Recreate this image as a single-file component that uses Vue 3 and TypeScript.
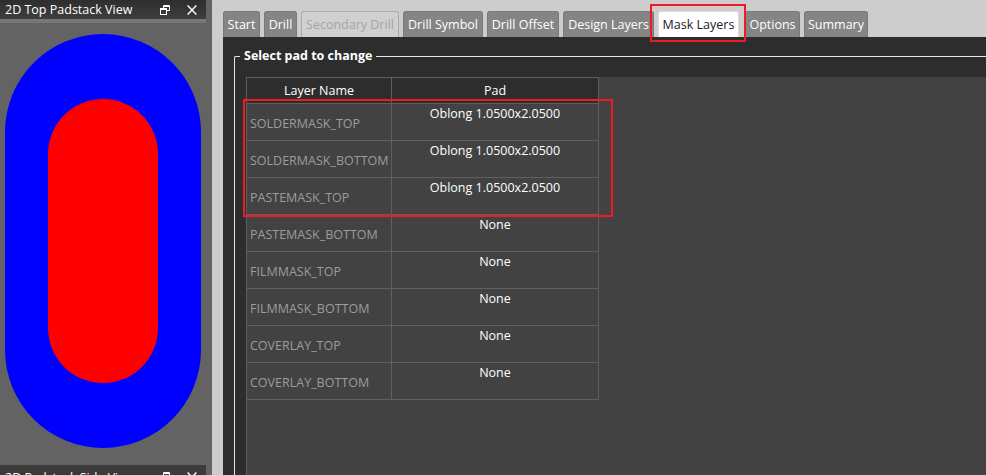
<script setup lang="ts">
interface Tab { label: string; width: number; state?: 'disabled' | 'active' }
const tabs: Tab[] = [
  { label: 'Start', width: 37 },
  { label: 'Drill', width: 33 },
  { label: 'Secondary Drill', width: 98, state: 'disabled' },
  { label: 'Drill Symbol', width: 80 },
  { label: 'Drill Offset', width: 72 },
  { label: 'Design Layers', width: 91 },
  { label: 'Mask Layers', width: 81, state: 'active' },
  { label: 'Options', width: 55 },
  { label: 'Summary', width: 64 },
]
const oblong = 'Oblong 1.0500x2.0500'
const rows = [
  { layer: 'SOLDERMASK_TOP', pad: oblong },
  { layer: 'SOLDERMASK_BOTTOM', pad: oblong },
  { layer: 'PASTEMASK_TOP', pad: oblong },
  { layer: 'PASTEMASK_BOTTOM', pad: 'None' },
  { layer: 'FILMMASK_TOP', pad: 'None' },
  { layer: 'FILMMASK_BOTTOM', pad: 'None' },
  { layer: 'COVERLAY_TOP', pad: 'None' },
  { layer: 'COVERLAY_BOTTOM', pad: 'None' },
]
</script>

<template>
  <div class="app">
    <aside class="dock">
      <div class="title">
        <span class="title-text">2D Top Padstack View</span>
        <svg class="ico restore" width="10" height="10" viewBox="0 0 10 10" fill="none" stroke="#fff">
          <path d="M3.5 3V.5h6v5H7" />
          <path d="M3.5 1.5h6" />
          <rect x=".5" y="3.5" width="6" height="6" />
          <path d="M.5 4.5h6" />
        </svg>
        <svg class="ico close" width="10" height="10" viewBox="0 0 10 10" fill="none" stroke="#fff" stroke-width="1.4">
          <path d="M.6.6l8.8 8.8M9.4.6L.6 9.4" />
        </svg>
      </div>
      <div class="title-strip"></div>
      <div class="canvas">
        <div class="pad-outer">
          <div class="pad-inner"></div>
        </div>
      </div>
      <div class="title second">
        <span class="title-text">2D Padstack Side View</span>
        <svg class="ico restore" width="10" height="10" viewBox="0 0 10 10" fill="none" stroke="#fff">
          <path d="M3.5 3V.5h6v5H7" />
          <path d="M3.5 1.5h6" />
          <rect x=".5" y="3.5" width="6" height="6" />
          <path d="M.5 4.5h6" />
        </svg>
        <svg class="ico close" width="10" height="10" viewBox="0 0 10 10" fill="none" stroke="#fff" stroke-width="1.4">
          <path d="M.6.6l8.8 8.8M9.4.6L.6 9.4" />
        </svg>
      </div>
    </aside>

    <main class="main">
      <nav class="tabs">
        <div
          v-for="t in tabs"
          :key="t.label"
          class="tab"
          :class="t.state"
          :style="{ width: t.width + 'px' }"
        >{{ t.label }}</div>
      </nav>
      <section class="body">
        <fieldset class="group">
          <legend>Select pad to change</legend>
          <div class="sheet">
            <div class="table">
              <div class="head cell">Layer Name</div>
              <div class="head cell">Pad</div>
              <template v-for="r in rows" :key="r.layer">
                <div class="cell layer">{{ r.layer }}</div>
                <div class="cell value">{{ r.pad }}</div>
              </template>
            </div>
          </div>
        </fieldset>
      </section>
    </main>

    <div class="mark mark-tab"></div>
    <div class="mark mark-rows"></div>
  </div>
</template>

<style>
html, body { margin: 0; padding: 0; overflow: hidden; }
</style>

<style scoped>
.app {
  position: relative;
  display: flex;
  width: 986px;
  height: 475px;
  overflow: hidden;
  background: #cdcdcd;
  font-family: "Open Sans", "Noto Sans", sans-serif;
  font-size: 12.5px;
}
.dock {
  display: flex;
  flex-direction: column;
  flex: none;
  width: 212px;
  height: 475px;
  background: #636363;
}
.title {
  display: flex;
  flex: none;
  align-items: center;
  width: 206px;
  height: 19px;
  padding-left: 5px;
  box-sizing: border-box;
  background: linear-gradient(#2e2e2e, #3e3e3e);
  color: #fff;
}
.title.second {
  height: 21px;
  align-items: flex-start;
  padding-top: 4px;
  background: linear-gradient(#3e3e3e, #333);
}
.second .ico { margin-top: 3px; }
.title-text { flex: 1; white-space: nowrap; line-height: 18px; }
.ico { flex: none; }
.restore { margin-right: 17px; }
.close { margin-right: 9px; }
.title-strip { flex: none; width: 206px; height: 4px; background: #777; }
.canvas { flex: none; height: 442px; padding: 11px 0 0 5px; box-sizing: border-box; }
.pad-outer {
  display: flex;
  align-items: center;
  justify-content: center;
  width: 196px;
  height: 414px;
  border-radius: 98px;
  background: #0000ff;
}
.pad-inner { width: 110px; height: 284px; border-radius: 55px; background: #ff0000; }
.main { display: flex; flex: 1; flex-direction: column; min-width: 0; padding-left: 11px; }
.tabs { display: flex; flex: none; gap: 4px; height: 37px; padding-top: 11px; box-sizing: border-box; }
.tab {
  flex: none;
  height: 26px;
  box-sizing: border-box;
  border: 1px solid #7a7a7a;
  border-bottom: 0;
  border-radius: 3px 3px 0 0;
  background: #858585;
  color: #fff;
  line-height: 26px;
  text-align: center;
  white-space: nowrap;
}
.tab.disabled { background: #d0d0d0; border-color: #ababab; color: #a5a5a5; }
.tab.active { margin: 0 2px 0 0; background: #fff; border-color: #dcdcdc; color: #1a1a2a; }
.body { flex: 1; padding: 11px 0 0 11px; background: #2d2d2d; }
.group {
  height: 500px;
  min-width: 0;
  margin: 0;
  padding: 13px 0 0 11px;
  box-sizing: border-box;
  border: 0;
  border-top: 1px solid #e6e6e6;
  border-left: 1px solid #e6e6e6;
  border-top-left-radius: 2px;
}
.group legend {
  margin-left: -6px;
  padding: 0 4px;
  color: #fff;
  font-weight: 700;
  line-height: 16px;
}
.sheet { height: 420px; background: #424242; border-left: 1px solid #5f5f5f; }
.table {
  display: grid;
  grid-template-columns: 145px 207px;
  grid-template-rows: 27px repeat(8, 37px);
  width: 352px;
}
.cell {
  box-sizing: border-box;
  border-right: 1px solid #5f5f5f;
  border-bottom: 1px solid #5f5f5f;
  white-space: nowrap;
}
.head {
  background: #2d2d2d;
  border-top: 1px solid #5f5f5f;
  color: #fff;
  text-align: center;
  line-height: 25px;
}
.layer { padding: 8px 0 0 3px; color: #9c9c9c; line-height: 24px; }
.value { color: #fff; text-align: center; line-height: 20px; }
.mark { position: absolute; border: 2px solid #ed1c24; box-sizing: border-box; pointer-events: none; }
.mark-tab { left: 650px; top: 4px; width: 96px; height: 38px; }
.mark-rows { left: 243px; top: 99px; width: 370px; height: 118px; }
</style>
